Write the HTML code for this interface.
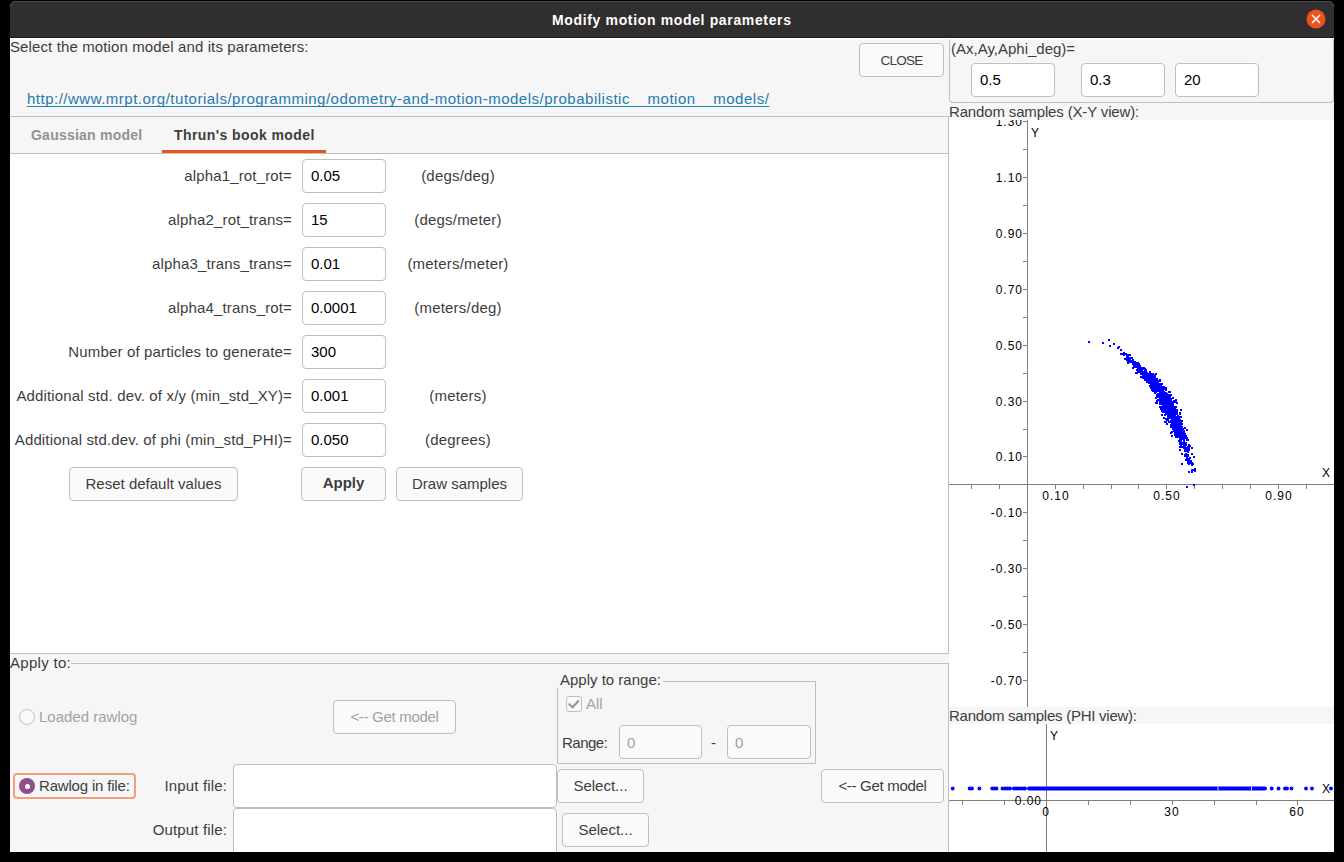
<!DOCTYPE html>
<html><head><meta charset="utf-8">
<style>
*{box-sizing:border-box;margin:0;padding:0}
html,body{width:1344px;height:862px;background:#000;overflow:hidden}
body{position:relative;font-family:"Liberation Sans",sans-serif;font-size:15px;color:#3d3d3d}
.a{position:absolute}
.t{position:absolute;line-height:15px;white-space:nowrap}
#win{position:absolute;left:10px;top:1px;width:1324px;height:851px;background:#f6f6f6;border-radius:6px 6px 0 0;overflow:hidden}
#title{position:absolute;left:0;top:0;width:1324px;height:37px;background:#302e2e;border-top:1px solid #474545;border-bottom:1px solid #1d1c1c}
.btn{position:absolute;background:#fafafa;border:1px solid #c0bfbe;border-radius:4px;text-align:center;line-height:31px;color:#3d3d3d}
.ent{position:absolute;background:#fff;border:1px solid #c0bfbe;border-radius:4px;color:#000}
.lbl{position:absolute;line-height:15px;white-space:nowrap;text-align:right;letter-spacing:0.15px}
.pl{position:absolute;font-size:12px;line-height:12px;white-space:nowrap;color:#000;letter-spacing:1px}
.unit{position:absolute;line-height:15px;white-space:nowrap;text-align:center;width:160px;letter-spacing:0.2px}
</style></head>
<body>
<div id="win">
 <div id="title"></div>
 <div class="a" style="left:0;top:37px;width:1324px;height:1px;background:#fff"></div>
</div>
<!-- title text -->
<div class="t" style="left:552px;top:13px;color:#fff;font-weight:bold;font-size:14px;letter-spacing:0.65px">Modify motion model parameters</div>
<svg class="a" style="left:1306px;top:9px" width="20" height="20"><circle cx="10" cy="10" r="9.5" fill="#e95420"/><path d="M6 6L14 14M14 6L6 14" stroke="#fff" stroke-width="1.5"/></svg>

<!-- header text -->
<div class="t" style="left:10px;top:39px;letter-spacing:0.12px">Select the motion model and its parameters:</div>
<div class="btn" style="left:859px;top:43px;width:85px;height:34px;font-size:13.5px;letter-spacing:-0.8px;line-height:33px">CLOSE</div>
<div class="t" style="left:27px;top:91px;color:#1f7bb0;text-decoration:underline;text-decoration-skip-ink:none;text-underline-offset:2px;letter-spacing:0.5px">http://www.mrpt.org/tutorials/programming/odometry-and-motion-models/probabilistic__motion__models/</div>

<!-- tabs -->
<div class="a" style="left:10px;top:116px;width:939px;height:1px;background:#c0bfbe"></div>
<div class="a" style="left:10px;top:153px;width:939px;height:1px;background:#c0bfbe"></div>
<div class="a" style="left:10px;top:154px;width:938px;height:499px;background:#fff"></div>
<div class="a" style="left:948px;top:116px;width:1px;height:538px;background:#c0bfbe"></div>
<div class="a" style="left:10px;top:653px;width:939px;height:1px;background:#c0bfbe"></div>
<div class="t" style="left:31px;top:128px;font-weight:bold;font-size:14px;color:#929292;letter-spacing:0.23px">Gaussian model</div>
<div class="t" style="left:174px;top:128px;font-weight:bold;font-size:14px;color:#3d3d3d;letter-spacing:0.42px">Thrun's book model</div>
<div class="a" style="left:162px;top:150px;width:164px;height:3px;background:#e95420"></div>

<!-- form rows -->
<div class="lbl" style="left:0;width:292px;top:168px">alpha1_rot_rot=</div>
<div class="ent" style="left:302px;top:159px;width:84px;height:34px"></div>
<div class="t" style="left:311px;top:168px;color:#000">0.05</div>
<div class="unit" style="left:378px;top:168px">(degs/deg)</div>
<div class="lbl" style="left:0;width:292px;top:212px">alpha2_rot_trans=</div>
<div class="ent" style="left:302px;top:203px;width:84px;height:34px"></div>
<div class="t" style="left:311px;top:212px;color:#000">15</div>
<div class="unit" style="left:378px;top:212px">(degs/meter)</div>
<div class="lbl" style="left:0;width:292px;top:256px">alpha3_trans_trans=</div>
<div class="ent" style="left:302px;top:247px;width:84px;height:34px"></div>
<div class="t" style="left:311px;top:256px;color:#000">0.01</div>
<div class="unit" style="left:378px;top:256px">(meters/meter)</div>
<div class="lbl" style="left:0;width:292px;top:300px">alpha4_trans_rot=</div>
<div class="ent" style="left:302px;top:291px;width:84px;height:34px"></div>
<div class="t" style="left:311px;top:300px;color:#000">0.0001</div>
<div class="unit" style="left:378px;top:300px">(meters/deg)</div>
<div class="lbl" style="left:0;width:292px;top:344px">Number of particles to generate=</div>
<div class="ent" style="left:302px;top:335px;width:84px;height:34px"></div>
<div class="t" style="left:311px;top:344px;color:#000">300</div>
<div class="lbl" style="left:0;width:292px;top:388px">Additional std. dev. of x/y (min_std_XY)=</div>
<div class="ent" style="left:302px;top:379px;width:84px;height:34px"></div>
<div class="t" style="left:311px;top:388px;color:#000">0.001</div>
<div class="unit" style="left:378px;top:388px">(meters)</div>
<div class="lbl" style="left:0;width:292px;top:432px">Additional std.dev. of phi (min_std_PHI)=</div>
<div class="ent" style="left:302px;top:423px;width:84px;height:34px"></div>
<div class="t" style="left:311px;top:432px;color:#000">0.050</div>
<div class="unit" style="left:378px;top:432px">(degrees)</div>
<div class="btn" style="left:69px;top:467px;width:169px;height:34px">Reset default values</div>
<div class="btn" style="left:301px;top:467px;width:85px;height:34px;font-weight:bold;line-height:30px">Apply</div>
<div class="btn" style="left:396px;top:467px;width:127px;height:34px">Draw samples</div>

<!-- apply to -->
<div class="t" style="left:10px;top:655px;letter-spacing:0.3px">Apply to:</div>
<div class="a" style="left:71px;top:663px;width:878px;height:1px;background:#c0bfbe"></div>
<div class="a" style="left:948px;top:663px;width:1px;height:189px;background:#c0bfbe"></div>
<div class="a" style="left:19px;top:709px;width:16px;height:16px;border-radius:50%;border:1px solid #c0bfbe;background:#fafafa"></div>
<div class="t" style="left:39px;top:709px;color:#a5a29f">Loaded rawlog</div>
<div class="btn" style="left:333px;top:700px;width:123px;height:34px;color:#a5a29f;letter-spacing:-0.3px">&lt;-- Get model</div>
<!-- apply to range frame -->
<div class="a" style="left:557px;top:681px;width:259px;height:83px;border:1px solid #c0bfbe"></div>
<div class="a" style="left:556px;top:672px;width:107px;height:16px;background:#f6f6f6"></div>
<div class="t" style="left:560px;top:672px">Apply to range:</div>
<div class="a" style="left:566px;top:696px;width:16px;height:16px;border:1px solid #c0bfbe;border-radius:3px;background:#fafafa"></div>
<svg class="a" style="left:566px;top:696px" width="16" height="16"><path d="M2.8 7.6L6.5 11.2L12.8 4.5" fill="none" stroke="#949494" stroke-width="2"/></svg>
<div class="t" style="left:586px;top:696px;color:#a5a29f">All</div>
<div class="t" style="left:562px;top:735px;letter-spacing:-0.5px">Range:</div>
<div class="ent" style="left:619px;top:725px;width:83px;height:34px;background:#fafafa"></div>
<div class="t" style="left:627px;top:735px;color:#a5a29f">0</div>
<div class="t" style="left:711px;top:735px">-</div>
<div class="ent" style="left:727px;top:725px;width:84px;height:34px;background:#fafafa"></div>
<div class="t" style="left:735px;top:735px;color:#a5a29f">0</div>
<!-- rawlog in file -->
<div class="a" style="left:13px;top:773px;width:123px;height:26px;border:2px solid #f0a080;border-radius:4px"></div>
<div class="a" style="left:19px;top:778px;width:16px;height:16px;border-radius:50%;background:#924d8b"></div>
<div class="a" style="left:24.5px;top:783.5px;width:5px;height:5px;border-radius:50%;background:#fff"></div>
<div class="t" style="left:39px;top:778px;letter-spacing:-0.18px">Rawlog in file:</div>
<div class="lbl" style="left:0;width:227px;top:778px">Input file:</div>
<div class="ent" style="left:233px;top:764px;width:324px;height:44px"></div>
<div class="btn" style="left:557px;top:769px;width:87px;height:34px">Select...</div>
<div class="btn" style="left:821px;top:769px;width:123px;height:34px;letter-spacing:-0.3px">&lt;-- Get model</div>
<div class="lbl" style="left:0;width:227px;top:822px">Output file:</div>
<div class="ent" style="left:233px;top:808px;width:324px;height:50px"></div>
<div class="btn" style="left:562px;top:813px;width:87px;height:34px">Select...</div>
<!-- right panel -->
<div class="a" style="left:949px;top:38px;width:385px;height:65px;border:1px solid #c0bfbe;border-top-color:#fff;border-radius:4px"></div>
<div class="t" style="left:951px;top:41px">(Ax,Ay,Aphi_deg)=</div>
<div class="ent" style="left:971px;top:63px;width:84px;height:34px"></div>
<div class="t" style="left:980px;top:72px;color:#000">0.5</div>
<div class="ent" style="left:1081px;top:63px;width:84px;height:34px"></div>
<div class="t" style="left:1090px;top:72px;color:#000">0.3</div>
<div class="ent" style="left:1175px;top:63px;width:84px;height:34px"></div>
<div class="t" style="left:1184px;top:72px;color:#000">20</div>
<div class="t" style="left:949px;top:104px;letter-spacing:-0.15px">Random samples (X-Y view):</div>
<div class="a" style="left:948px;top:116px;width:1px;height:538px;background:#c0bfbe"></div>
<div class="a" style="left:949px;top:120px;width:385px;height:587px;overflow:hidden;background:#fff">
<svg class="a" style="left:0;top:0" width="385" height="587" shape-rendering="crispEdges">
<g fill="#7f7f7f"><rect x="78" y="0" width="1" height="587"/>
<rect x="0" y="364" width="385" height="1"/>
<rect x="74" y="560" width="4" height="1"/>
<rect x="74" y="532" width="4" height="1"/>
<rect x="74" y="504" width="4" height="1"/>
<rect x="74" y="476" width="4" height="1"/>
<rect x="74" y="448" width="4" height="1"/>
<rect x="74" y="420" width="4" height="1"/>
<rect x="74" y="392" width="4" height="1"/>
<rect x="74" y="364" width="4" height="1"/>
<rect x="74" y="336" width="4" height="1"/>
<rect x="74" y="309" width="4" height="1"/>
<rect x="74" y="281" width="4" height="1"/>
<rect x="74" y="253" width="4" height="1"/>
<rect x="74" y="225" width="4" height="1"/>
<rect x="74" y="197" width="4" height="1"/>
<rect x="74" y="169" width="4" height="1"/>
<rect x="74" y="141" width="4" height="1"/>
<rect x="74" y="113" width="4" height="1"/>
<rect x="74" y="85" width="4" height="1"/>
<rect x="74" y="57" width="4" height="1"/>
<rect x="74" y="29" width="4" height="1"/>
<rect x="74" y="1" width="4" height="1"/>
<rect x="22" y="364" width="1" height="5"/>
<rect x="50" y="364" width="1" height="5"/>
<rect x="106" y="364" width="1" height="5"/>
<rect x="134" y="364" width="1" height="5"/>
<rect x="162" y="364" width="1" height="5"/>
<rect x="189" y="364" width="1" height="5"/>
<rect x="217" y="364" width="1" height="5"/>
<rect x="245" y="364" width="1" height="5"/>
<rect x="273" y="364" width="1" height="5"/>
<rect x="301" y="364" width="1" height="5"/>
<rect x="329" y="364" width="1" height="5"/>
<rect x="357" y="364" width="1" height="5"/>
</g>
<path d="M139 221h2v2h-2zM153 222h2v2h-2zM159 219h2v2h-2zM160 225h2v2h-2zM164 223h2v2h-2zM168 227h2v2h-2zM169 226h2v2h-2zM171 229h2v2h-2zM171 233h2v2h-2zM173 233h2v2h-2zM174 232h2v2h-2zM174 234h2v2h-2zM175 233h2v2h-2zM175 238h2v2h-2zM176 233h2v2h-2zM177 235h2v2h-2zM177 237h2v2h-2zM177 239h2v2h-2zM178 234h2v2h-2zM178 236h2v2h-2zM178 240h2v2h-2zM178 242h2v2h-2zM179 237h2v2h-2zM179 238h2v2h-2zM179 239h2v2h-2zM179 241h2v2h-2zM180 234h2v2h-2zM180 239h2v2h-2zM180 240h2v2h-2zM181 237h2v2h-2zM181 241h2v2h-2zM182 237h2v2h-2zM182 240h2v2h-2zM183 239h2v2h-2zM183 242h2v2h-2zM183 243h2v2h-2zM183 247h2v2h-2zM184 241h2v2h-2zM184 244h2v2h-2zM184 245h2v2h-2zM185 241h2v2h-2zM185 243h2v2h-2zM185 245h2v2h-2zM185 246h2v2h-2zM186 244h2v2h-2zM186 245h2v2h-2zM186 246h2v2h-2zM186 252h2v2h-2zM187 242h2v2h-2zM187 244h2v2h-2zM187 246h2v2h-2zM187 249h2v2h-2zM187 252h2v2h-2zM188 242h2v2h-2zM188 245h2v2h-2zM188 247h2v2h-2zM188 249h2v2h-2zM188 250h2v2h-2zM188 251h2v2h-2zM189 243h2v2h-2zM189 244h2v2h-2zM189 247h2v2h-2zM189 249h2v2h-2zM190 245h2v2h-2zM190 246h2v2h-2zM190 249h2v2h-2zM190 250h2v2h-2zM190 251h2v2h-2zM191 247h2v2h-2zM191 248h2v2h-2zM191 251h2v2h-2zM191 253h2v2h-2zM191 256h2v2h-2zM192 247h2v2h-2zM192 249h2v2h-2zM192 250h2v2h-2zM192 251h2v2h-2zM192 252h2v2h-2zM192 253h2v2h-2zM193 248h2v2h-2zM193 255h2v2h-2zM193 256h2v2h-2zM193 257h2v2h-2zM194 247h2v2h-2zM194 251h2v2h-2zM194 252h2v2h-2zM194 253h2v2h-2zM194 255h2v2h-2zM195 248h2v2h-2zM195 249h2v2h-2zM195 250h2v2h-2zM195 253h2v2h-2zM195 254h2v2h-2zM195 255h2v2h-2zM195 257h2v2h-2zM195 259h2v2h-2zM196 249h2v2h-2zM196 250h2v2h-2zM196 251h2v2h-2zM196 254h2v2h-2zM196 255h2v2h-2zM196 256h2v2h-2zM197 252h2v2h-2zM197 254h2v2h-2zM197 255h2v2h-2zM197 257h2v2h-2zM197 259h2v2h-2zM197 260h2v2h-2zM197 261h2v2h-2zM198 256h2v2h-2zM198 257h2v2h-2zM198 258h2v2h-2zM198 259h2v2h-2zM198 260h2v2h-2zM199 253h2v2h-2zM199 254h2v2h-2zM199 255h2v2h-2zM199 256h2v2h-2zM199 257h2v2h-2zM199 258h2v2h-2zM199 260h2v2h-2zM199 262h2v2h-2zM200 251h2v2h-2zM200 255h2v2h-2zM200 256h2v2h-2zM200 257h2v2h-2zM200 258h2v2h-2zM200 259h2v2h-2zM200 260h2v2h-2zM200 261h2v2h-2zM200 262h2v2h-2zM200 265h2v2h-2zM201 253h2v2h-2zM201 255h2v2h-2zM201 256h2v2h-2zM201 257h2v2h-2zM201 259h2v2h-2zM201 260h2v2h-2zM201 261h2v2h-2zM201 262h2v2h-2zM201 263h2v2h-2zM201 265h2v2h-2zM201 267h2v2h-2zM202 255h2v2h-2zM202 256h2v2h-2zM202 259h2v2h-2zM202 260h2v2h-2zM202 261h2v2h-2zM202 263h2v2h-2zM202 264h2v2h-2zM202 267h2v2h-2zM202 269h2v2h-2zM203 253h2v2h-2zM203 256h2v2h-2zM203 257h2v2h-2zM203 258h2v2h-2zM203 259h2v2h-2zM203 260h2v2h-2zM203 261h2v2h-2zM203 262h2v2h-2zM203 264h2v2h-2zM203 265h2v2h-2zM203 269h2v2h-2zM203 270h2v2h-2zM204 254h2v2h-2zM204 256h2v2h-2zM204 258h2v2h-2zM204 259h2v2h-2zM204 261h2v2h-2zM204 263h2v2h-2zM204 264h2v2h-2zM204 266h2v2h-2zM204 267h2v2h-2zM205 255h2v2h-2zM205 256h2v2h-2zM205 259h2v2h-2zM205 260h2v2h-2zM205 261h2v2h-2zM205 262h2v2h-2zM205 266h2v2h-2zM205 268h2v2h-2zM205 269h2v2h-2zM205 270h2v2h-2zM205 272h2v2h-2zM206 253h2v2h-2zM206 258h2v2h-2zM206 259h2v2h-2zM206 261h2v2h-2zM206 263h2v2h-2zM206 264h2v2h-2zM206 266h2v2h-2zM206 269h2v2h-2zM206 270h2v2h-2zM206 271h2v2h-2zM206 277h2v2h-2zM206 282h2v2h-2zM207 258h2v2h-2zM207 260h2v2h-2zM207 261h2v2h-2zM207 262h2v2h-2zM207 263h2v2h-2zM207 264h2v2h-2zM207 265h2v2h-2zM207 266h2v2h-2zM207 267h2v2h-2zM207 269h2v2h-2zM207 270h2v2h-2zM207 274h2v2h-2zM207 276h2v2h-2zM207 280h2v2h-2zM207 281h2v2h-2zM207 282h2v2h-2zM208 260h2v2h-2zM208 262h2v2h-2zM208 263h2v2h-2zM208 264h2v2h-2zM208 266h2v2h-2zM208 268h2v2h-2zM208 269h2v2h-2zM208 270h2v2h-2zM208 273h2v2h-2zM208 274h2v2h-2zM208 276h2v2h-2zM208 279h2v2h-2zM209 260h2v2h-2zM209 263h2v2h-2zM209 264h2v2h-2zM209 265h2v2h-2zM209 266h2v2h-2zM209 267h2v2h-2zM209 273h2v2h-2zM209 274h2v2h-2zM209 275h2v2h-2zM209 276h2v2h-2zM209 279h2v2h-2zM210 259h2v2h-2zM210 260h2v2h-2zM210 265h2v2h-2zM210 266h2v2h-2zM210 267h2v2h-2zM210 269h2v2h-2zM210 270h2v2h-2zM210 271h2v2h-2zM210 272h2v2h-2zM210 273h2v2h-2zM210 274h2v2h-2zM210 275h2v2h-2zM210 277h2v2h-2zM210 281h2v2h-2zM210 282h2v2h-2zM210 283h2v2h-2zM210 286h2v2h-2zM211 263h2v2h-2zM211 264h2v2h-2zM211 265h2v2h-2zM211 266h2v2h-2zM211 267h2v2h-2zM211 270h2v2h-2zM211 271h2v2h-2zM211 272h2v2h-2zM211 273h2v2h-2zM211 275h2v2h-2zM211 276h2v2h-2zM211 277h2v2h-2zM211 279h2v2h-2zM211 280h2v2h-2zM211 282h2v2h-2zM211 288h2v2h-2zM212 263h2v2h-2zM212 269h2v2h-2zM212 270h2v2h-2zM212 271h2v2h-2zM212 272h2v2h-2zM212 275h2v2h-2zM212 276h2v2h-2zM212 277h2v2h-2zM212 278h2v2h-2zM212 280h2v2h-2zM212 282h2v2h-2zM212 283h2v2h-2zM212 286h2v2h-2zM212 288h2v2h-2zM212 290h2v2h-2zM212 294h2v2h-2zM213 266h2v2h-2zM213 267h2v2h-2zM213 268h2v2h-2zM213 269h2v2h-2zM213 271h2v2h-2zM213 272h2v2h-2zM213 273h2v2h-2zM213 274h2v2h-2zM213 275h2v2h-2zM213 276h2v2h-2zM213 277h2v2h-2zM213 279h2v2h-2zM213 280h2v2h-2zM213 281h2v2h-2zM213 282h2v2h-2zM213 283h2v2h-2zM213 284h2v2h-2zM213 285h2v2h-2zM213 286h2v2h-2zM213 288h2v2h-2zM213 289h2v2h-2zM213 290h2v2h-2zM213 291h2v2h-2zM214 266h2v2h-2zM214 267h2v2h-2zM214 271h2v2h-2zM214 274h2v2h-2zM214 275h2v2h-2zM214 276h2v2h-2zM214 277h2v2h-2zM214 278h2v2h-2zM214 280h2v2h-2zM214 281h2v2h-2zM214 282h2v2h-2zM214 283h2v2h-2zM214 284h2v2h-2zM214 286h2v2h-2zM214 289h2v2h-2zM214 297h2v2h-2zM215 267h2v2h-2zM215 268h2v2h-2zM215 273h2v2h-2zM215 274h2v2h-2zM215 275h2v2h-2zM215 276h2v2h-2zM215 277h2v2h-2zM215 281h2v2h-2zM215 282h2v2h-2zM215 283h2v2h-2zM215 284h2v2h-2zM215 285h2v2h-2zM215 286h2v2h-2zM215 288h2v2h-2zM215 291h2v2h-2zM215 294h2v2h-2zM215 301h2v2h-2zM216 267h2v2h-2zM216 269h2v2h-2zM216 272h2v2h-2zM216 273h2v2h-2zM216 274h2v2h-2zM216 275h2v2h-2zM216 276h2v2h-2zM216 277h2v2h-2zM216 278h2v2h-2zM216 279h2v2h-2zM216 280h2v2h-2zM216 281h2v2h-2zM216 282h2v2h-2zM216 284h2v2h-2zM216 285h2v2h-2zM216 286h2v2h-2zM216 287h2v2h-2zM216 289h2v2h-2zM216 290h2v2h-2zM216 291h2v2h-2zM216 292h2v2h-2zM216 293h2v2h-2zM216 298h2v2h-2zM216 301h2v2h-2zM217 273h2v2h-2zM217 274h2v2h-2zM217 275h2v2h-2zM217 277h2v2h-2zM217 278h2v2h-2zM217 279h2v2h-2zM217 281h2v2h-2zM217 282h2v2h-2zM217 283h2v2h-2zM217 284h2v2h-2zM217 285h2v2h-2zM217 286h2v2h-2zM217 287h2v2h-2zM217 288h2v2h-2zM217 290h2v2h-2zM217 299h2v2h-2zM217 303h2v2h-2zM218 274h2v2h-2zM218 277h2v2h-2zM218 278h2v2h-2zM218 279h2v2h-2zM218 281h2v2h-2zM218 282h2v2h-2zM218 283h2v2h-2zM218 284h2v2h-2zM218 285h2v2h-2zM218 287h2v2h-2zM218 289h2v2h-2zM218 290h2v2h-2zM218 291h2v2h-2zM218 292h2v2h-2zM218 293h2v2h-2zM218 295h2v2h-2zM218 297h2v2h-2zM218 298h2v2h-2zM218 299h2v2h-2zM219 271h2v2h-2zM219 274h2v2h-2zM219 276h2v2h-2zM219 278h2v2h-2zM219 279h2v2h-2zM219 280h2v2h-2zM219 281h2v2h-2zM219 282h2v2h-2zM219 283h2v2h-2zM219 284h2v2h-2zM219 286h2v2h-2zM219 287h2v2h-2zM219 288h2v2h-2zM219 289h2v2h-2zM219 291h2v2h-2zM219 292h2v2h-2zM219 294h2v2h-2zM219 296h2v2h-2zM219 297h2v2h-2zM219 301h2v2h-2zM220 271h2v2h-2zM220 276h2v2h-2zM220 279h2v2h-2zM220 280h2v2h-2zM220 281h2v2h-2zM220 282h2v2h-2zM220 283h2v2h-2zM220 285h2v2h-2zM220 286h2v2h-2zM220 287h2v2h-2zM220 288h2v2h-2zM220 291h2v2h-2zM220 294h2v2h-2zM220 295h2v2h-2zM221 274h2v2h-2zM221 278h2v2h-2zM221 279h2v2h-2zM221 280h2v2h-2zM221 281h2v2h-2zM221 282h2v2h-2zM221 285h2v2h-2zM221 286h2v2h-2zM221 287h2v2h-2zM221 289h2v2h-2zM221 290h2v2h-2zM221 291h2v2h-2zM221 293h2v2h-2zM221 294h2v2h-2zM221 295h2v2h-2zM221 296h2v2h-2zM221 297h2v2h-2zM221 300h2v2h-2zM221 301h2v2h-2zM221 304h2v2h-2zM221 306h2v2h-2zM221 312h2v2h-2zM222 281h2v2h-2zM222 282h2v2h-2zM222 283h2v2h-2zM222 284h2v2h-2zM222 285h2v2h-2zM222 286h2v2h-2zM222 287h2v2h-2zM222 288h2v2h-2zM222 290h2v2h-2zM222 291h2v2h-2zM222 292h2v2h-2zM222 295h2v2h-2zM222 296h2v2h-2zM222 298h2v2h-2zM222 300h2v2h-2zM222 302h2v2h-2zM222 306h2v2h-2zM222 311h2v2h-2zM222 315h2v2h-2zM223 277h2v2h-2zM223 281h2v2h-2zM223 283h2v2h-2zM223 285h2v2h-2zM223 286h2v2h-2zM223 288h2v2h-2zM223 290h2v2h-2zM223 291h2v2h-2zM223 292h2v2h-2zM223 294h2v2h-2zM223 295h2v2h-2zM223 301h2v2h-2zM223 303h2v2h-2zM223 304h2v2h-2zM223 305h2v2h-2zM223 307h2v2h-2zM223 308h2v2h-2zM224 280h2v2h-2zM224 286h2v2h-2zM224 288h2v2h-2zM224 289h2v2h-2zM224 290h2v2h-2zM224 292h2v2h-2zM224 294h2v2h-2zM224 295h2v2h-2zM224 296h2v2h-2zM224 297h2v2h-2zM224 299h2v2h-2zM224 301h2v2h-2zM224 302h2v2h-2zM224 304h2v2h-2zM224 305h2v2h-2zM224 310h2v2h-2zM225 280h2v2h-2zM225 281h2v2h-2zM225 288h2v2h-2zM225 289h2v2h-2zM225 291h2v2h-2zM225 293h2v2h-2zM225 294h2v2h-2zM225 295h2v2h-2zM225 296h2v2h-2zM225 297h2v2h-2zM225 298h2v2h-2zM225 300h2v2h-2zM225 301h2v2h-2zM225 303h2v2h-2zM225 306h2v2h-2zM225 308h2v2h-2zM225 310h2v2h-2zM225 311h2v2h-2zM225 313h2v2h-2zM225 314h2v2h-2zM226 279h2v2h-2zM226 281h2v2h-2zM226 286h2v2h-2zM226 290h2v2h-2zM226 292h2v2h-2zM226 293h2v2h-2zM226 296h2v2h-2zM226 298h2v2h-2zM226 300h2v2h-2zM226 301h2v2h-2zM226 302h2v2h-2zM226 303h2v2h-2zM226 304h2v2h-2zM226 306h2v2h-2zM226 307h2v2h-2zM226 308h2v2h-2zM226 309h2v2h-2zM226 310h2v2h-2zM226 311h2v2h-2zM226 313h2v2h-2zM226 315h2v2h-2zM226 316h2v2h-2zM227 282h2v2h-2zM227 289h2v2h-2zM227 291h2v2h-2zM227 293h2v2h-2zM227 297h2v2h-2zM227 298h2v2h-2zM227 299h2v2h-2zM227 300h2v2h-2zM227 303h2v2h-2zM227 304h2v2h-2zM227 305h2v2h-2zM227 306h2v2h-2zM227 307h2v2h-2zM227 310h2v2h-2zM227 312h2v2h-2zM228 295h2v2h-2zM228 298h2v2h-2zM228 299h2v2h-2zM228 302h2v2h-2zM228 303h2v2h-2zM228 304h2v2h-2zM228 306h2v2h-2zM228 308h2v2h-2zM228 309h2v2h-2zM228 310h2v2h-2zM228 311h2v2h-2zM228 314h2v2h-2zM228 315h2v2h-2zM228 316h2v2h-2zM229 296h2v2h-2zM229 297h2v2h-2zM229 298h2v2h-2zM229 299h2v2h-2zM229 301h2v2h-2zM229 302h2v2h-2zM229 303h2v2h-2zM229 306h2v2h-2zM229 307h2v2h-2zM229 308h2v2h-2zM229 309h2v2h-2zM229 310h2v2h-2zM229 312h2v2h-2zM229 313h2v2h-2zM229 315h2v2h-2zM229 316h2v2h-2zM229 320h2v2h-2zM230 292h2v2h-2zM230 293h2v2h-2zM230 299h2v2h-2zM230 302h2v2h-2zM230 304h2v2h-2zM230 305h2v2h-2zM230 306h2v2h-2zM230 307h2v2h-2zM230 309h2v2h-2zM230 310h2v2h-2zM230 311h2v2h-2zM230 313h2v2h-2zM230 314h2v2h-2zM230 315h2v2h-2zM230 317h2v2h-2zM230 319h2v2h-2zM230 320h2v2h-2zM230 321h2v2h-2zM230 323h2v2h-2zM230 326h2v2h-2zM230 329h2v2h-2zM231 289h2v2h-2zM231 296h2v2h-2zM231 301h2v2h-2zM231 302h2v2h-2zM231 303h2v2h-2zM231 304h2v2h-2zM231 305h2v2h-2zM231 306h2v2h-2zM231 307h2v2h-2zM231 308h2v2h-2zM231 310h2v2h-2zM231 312h2v2h-2zM231 313h2v2h-2zM231 315h2v2h-2zM231 317h2v2h-2zM231 318h2v2h-2zM231 319h2v2h-2zM231 321h2v2h-2zM231 322h2v2h-2zM231 323h2v2h-2zM231 324h2v2h-2zM232 300h2v2h-2zM232 303h2v2h-2zM232 306h2v2h-2zM232 309h2v2h-2zM232 310h2v2h-2zM232 312h2v2h-2zM232 313h2v2h-2zM232 315h2v2h-2zM232 316h2v2h-2zM232 317h2v2h-2zM232 318h2v2h-2zM232 323h2v2h-2zM232 326h2v2h-2zM232 333h2v2h-2zM232 343h2v2h-2zM233 308h2v2h-2zM233 311h2v2h-2zM233 313h2v2h-2zM233 314h2v2h-2zM233 315h2v2h-2zM233 316h2v2h-2zM233 322h2v2h-2zM233 323h2v2h-2zM233 326h2v2h-2zM234 310h2v2h-2zM234 311h2v2h-2zM234 314h2v2h-2zM234 315h2v2h-2zM234 316h2v2h-2zM234 317h2v2h-2zM234 318h2v2h-2zM234 319h2v2h-2zM234 320h2v2h-2zM234 324h2v2h-2zM234 327h2v2h-2zM235 307h2v2h-2zM235 313h2v2h-2zM235 315h2v2h-2zM235 317h2v2h-2zM235 322h2v2h-2zM235 324h2v2h-2zM235 325h2v2h-2zM235 327h2v2h-2zM235 328h2v2h-2zM235 330h2v2h-2zM235 334h2v2h-2zM235 335h2v2h-2zM236 315h2v2h-2zM236 322h2v2h-2zM236 324h2v2h-2zM236 327h2v2h-2zM236 330h2v2h-2zM236 333h2v2h-2zM236 334h2v2h-2zM236 339h2v2h-2zM237 309h2v2h-2zM237 317h2v2h-2zM237 319h2v2h-2zM237 328h2v2h-2zM237 336h2v2h-2zM237 338h2v2h-2zM237 366h2v2h-2zM238 319h2v2h-2zM238 326h2v2h-2zM238 327h2v2h-2zM238 329h2v2h-2zM238 331h2v2h-2zM238 334h2v2h-2zM238 335h2v2h-2zM238 339h2v2h-2zM238 341h2v2h-2zM238 342h2v2h-2zM239 324h2v2h-2zM239 325h2v2h-2zM239 327h2v2h-2zM239 329h2v2h-2zM239 338h2v2h-2zM239 340h2v2h-2zM239 342h2v2h-2zM239 343h2v2h-2zM239 351h2v2h-2zM240 325h2v2h-2zM240 337h2v2h-2zM240 341h2v2h-2zM241 340h2v2h-2zM241 342h2v2h-2zM242 327h2v2h-2zM242 333h2v2h-2zM242 342h2v2h-2zM242 344h2v2h-2zM242 349h2v2h-2zM242 350h2v2h-2zM242 351h2v2h-2zM243 343h2v2h-2zM243 349h2v2h-2zM244 336h2v2h-2zM244 364h2v2h-2zM245 348h2v2h-2zM245 350h2v2h-2z" fill="#0000ff"/>
</svg>
<div class="pl" style="left:14px;width:60px;text-align:right;top:555px">-0.70</div>
<div class="pl" style="left:14px;width:60px;text-align:right;top:499px">-0.50</div>
<div class="pl" style="left:14px;width:60px;text-align:right;top:443px">-0.30</div>
<div class="pl" style="left:14px;width:60px;text-align:right;top:387px">-0.10</div>
<div class="pl" style="left:14px;width:60px;text-align:right;top:331px">0.10</div>
<div class="pl" style="left:14px;width:60px;text-align:right;top:276px">0.30</div>
<div class="pl" style="left:14px;width:60px;text-align:right;top:220px">0.50</div>
<div class="pl" style="left:14px;width:60px;text-align:right;top:164px">0.70</div>
<div class="pl" style="left:14px;width:60px;text-align:right;top:108px">0.90</div>
<div class="pl" style="left:14px;width:60px;text-align:right;top:52px">1.10</div>
<div class="pl" style="left:14px;width:60px;text-align:right;top:-4px">1.30</div>
<div class="pl" style="left:77px;width:60px;text-align:center;top:370px">0.10</div>
<div class="pl" style="left:188px;width:60px;text-align:center;top:370px">0.50</div>
<div class="pl" style="left:300px;width:60px;text-align:center;top:370px">0.90</div>
<div class="pl" style="left:82px;top:7px">Y</div>
<div class="pl" style="left:373px;top:347px">X</div>
</div>
<div class="a" style="left:949px;top:707px;width:385px;height:17px;background:#f6f6f6"></div>
<div class="t" style="left:949px;top:708px;letter-spacing:-0.25px">Random samples (PHI view):</div>
<svg class="a" style="left:949px;top:724px" width="385" height="128">
<rect x="0" y="0" width="385" height="128" fill="#fff"/>
<g shape-rendering="crispEdges" fill="#7f7f7f"><rect x="97" y="0" width="1" height="128"/><rect x="0" y="76" width="385" height="1"/>
<rect x="13" y="76" width="1" height="5"/>
<rect x="55" y="76" width="1" height="5"/>
<rect x="139" y="76" width="1" height="5"/>
<rect x="181" y="76" width="1" height="5"/>
<rect x="223" y="76" width="1" height="5"/>
<rect x="265" y="76" width="1" height="5"/>
<rect x="307" y="76" width="1" height="5"/>
<rect x="348" y="76" width="1" height="5"/>
</g>
<rect x="78" y="62.5" width="240" height="4" rx="2" fill="#0000ff"/>
<rect x="268.5999999999999" y="62.5" width="0.8" height="4" fill="#fff"/><rect x="302.20000000000005" y="62.5" width="0.8" height="4" fill="#fff"/>
<circle cx="3.7000000000000455" cy="64.5" r="1.9" fill="#0000ff"/>
<circle cx="20.600000000000023" cy="64.5" r="1.9" fill="#0000ff"/>
<circle cx="23" cy="64.5" r="1.9" fill="#0000ff"/>
<circle cx="30.399999999999977" cy="64.5" r="1.9" fill="#0000ff"/>
<circle cx="43.200000000000045" cy="64.5" r="1.9" fill="#0000ff"/>
<circle cx="45.60000000000002" cy="64.5" r="1.9" fill="#0000ff"/>
<circle cx="47.5" cy="64.5" r="1.9" fill="#0000ff"/>
<circle cx="53.5" cy="64.5" r="1.9" fill="#0000ff"/>
<circle cx="56" cy="64.5" r="1.9" fill="#0000ff"/>
<circle cx="58.5" cy="64.5" r="1.9" fill="#0000ff"/>
<circle cx="61" cy="64.5" r="1.9" fill="#0000ff"/>
<circle cx="64.79999999999995" cy="64.5" r="1.9" fill="#0000ff"/>
<circle cx="67" cy="64.5" r="1.9" fill="#0000ff"/>
<circle cx="69" cy="64.5" r="1.9" fill="#0000ff"/>
<circle cx="71.39999999999998" cy="64.5" r="1.9" fill="#0000ff"/>
<circle cx="74" cy="64.5" r="1.9" fill="#0000ff"/>
<circle cx="76" cy="64.5" r="1.9" fill="#0000ff"/>
<circle cx="322.70000000000005" cy="64.5" r="1.9" fill="#0000ff"/>
<circle cx="329.5" cy="64.5" r="1.9" fill="#0000ff"/>
<circle cx="336" cy="64.5" r="1.9" fill="#0000ff"/>
<circle cx="338" cy="64.5" r="1.9" fill="#0000ff"/>
<circle cx="342.5" cy="64.5" r="1.9" fill="#0000ff"/>
<circle cx="357" cy="64.5" r="1.9" fill="#0000ff"/>
<circle cx="363" cy="64.5" r="1.9" fill="#0000ff"/>
<circle cx="382" cy="64.5" r="1.9" fill="#0000ff"/>
</svg>
<div class="pl" style="left:982px;width:60px;text-align:right;top:795px">0.00</div>
<div class="pl" style="left:1016px;width:60px;text-align:center;top:806px">0</div>
<div class="pl" style="left:1142px;width:60px;text-align:center;top:806px">30</div>
<div class="pl" style="left:1267px;width:60px;text-align:center;top:806px">60</div>
<div class="pl" style="left:1050px;top:730px">Y</div>
<div class="pl" style="left:1322px;top:783px">X</div>
<div class="a" style="left:0;top:852px;width:1344px;height:10px;background:#000"></div>

</body></html>
